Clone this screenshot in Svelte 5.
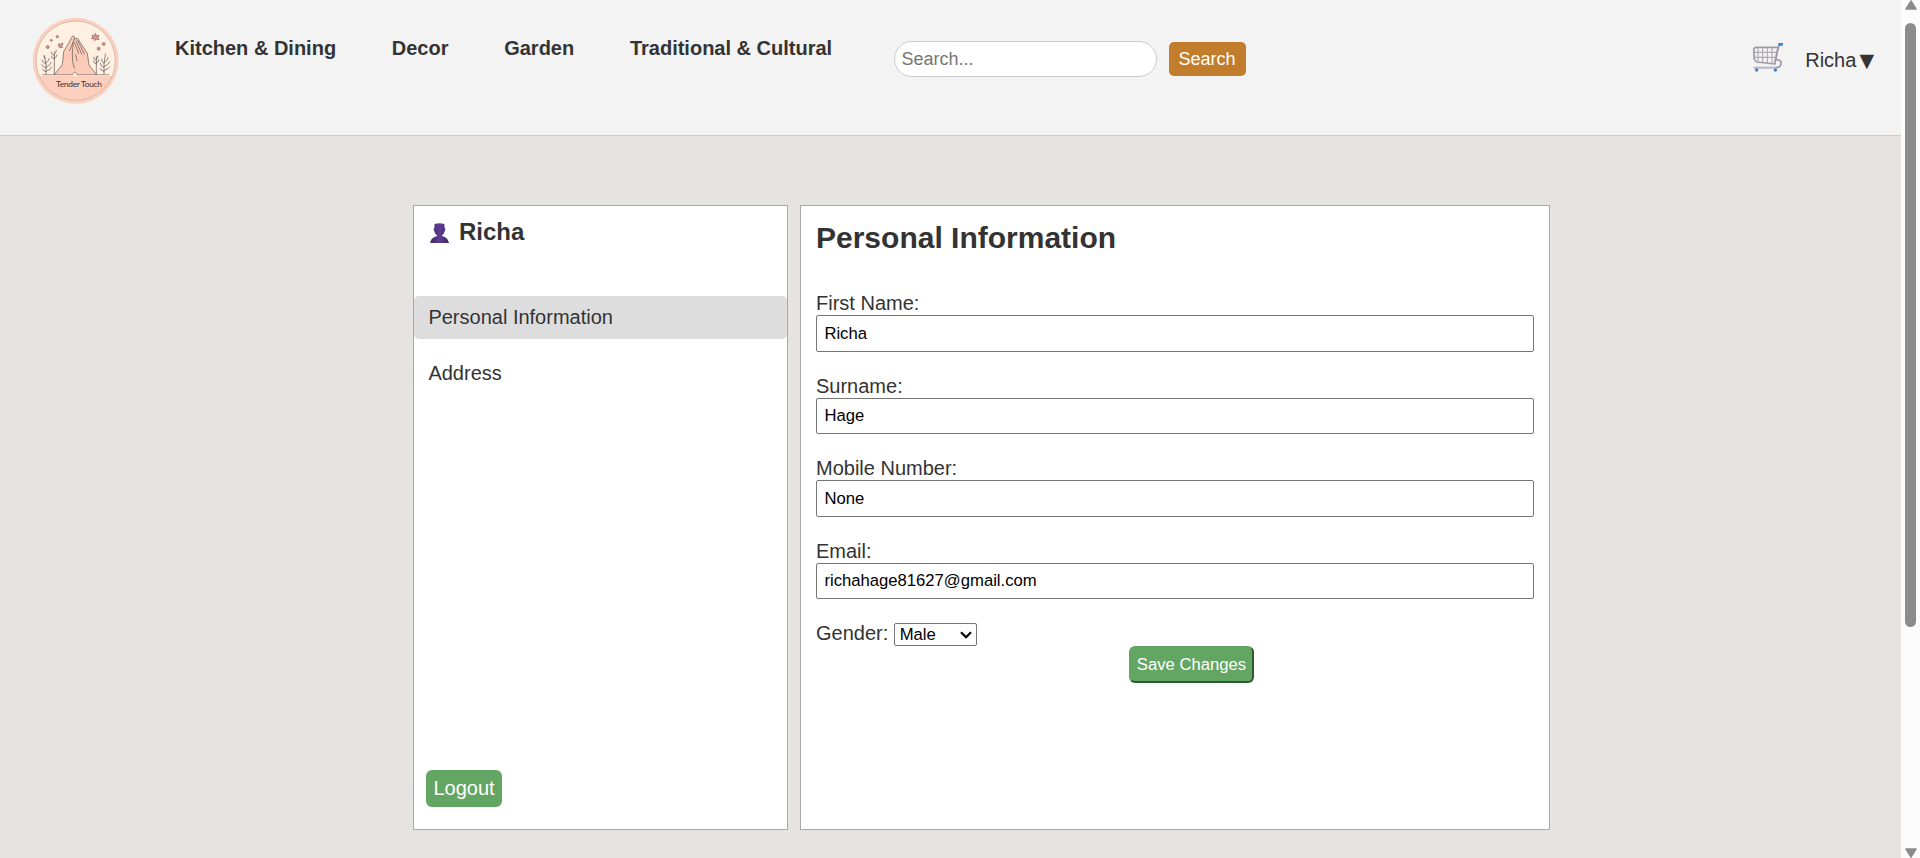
<script>
  const links = ['Kitchen & Dining', 'Decor', 'Garden', 'Traditional & Cultural'];
  const fields = [
    { id: 'first', label: 'First Name:', value: 'Richa' },
    { id: 'surname', label: 'Surname:', value: 'Hage' },
    { id: 'mobile', label: 'Mobile Number:', value: 'None' },
    { id: 'email', label: 'Email:', value: 'richahage81627@gmail.com' }
  ];
</script>

<div class="window">
  <div class="page">
    <header>
      <svg class="logo" viewBox="0 0 330 300">
        <circle cx="167" cy="152" r="129" fill="#fdcfbe" />
        <circle cx="167" cy="152" r="119" fill="#fff0e2" />
        <path d="M57 197H277A119 119 0 0 1 57 197Z" fill="#fdcfbe" />
        <circle cx="167" cy="152" r="119" fill="none" stroke="#b4aaa3" stroke-width="2" />
        <path d="M103 194L127 164L131 125L158 78Q164 76 163 88L166 84Q172 80 176 90L202 130L207 165L229 194H170Q164 178 158 194Z" fill="#fbcbb8" />
        <g fill="none" stroke="#5b5351" stroke-width="2" stroke-linecap="round">
          <path d="M68 194H158Q164 178 172 194H267" stroke-width="1.6" />
          <path d="M103 194L127 164L131 125L158 78Q165 75 163 88L149 122M163 88Q174 80 177 92L202 130L207 165L229 194M160 96L157 130Q155 157 163 174M164 99L176 130M168 93L185 132M173 91L193 132M167 135L171 152" />
          <path d="M78 193Q80 168 74 138M79 162Q66 158 66 150M79 157Q89 153 88 145M80 174Q67 172 65 164M80 170Q93 165 94 157M79 185Q70 184 67 177M80 183Q93 180 95 171M75 147Q70 141 72 136" />
          <path d="M103 193V126M103 137Q93 132 93 126M103 132Q110 129 109 121M103 147Q94 145 94 138M103 144Q111 142 111 135" />
          <path d="M229 193V139M229 151Q219 148 220 142M229 148Q236 145 234 138M229 162Q221 160 220 153M229 158Q238 157 237 149" />
          <path d="M252 193Q250 162 256 132M252 160Q243 156 245 147M253 156Q264 152 264 142M251 172Q240 168 241 160M252 169Q266 166 268 155M252 184Q241 182 240 175M252 181Q264 180 269 171" />
        </g>
        <g fill="#d99589" stroke="#71534f" stroke-width="1.6">
          <circle cx="83" cy="111" r="4.5" /><circle cx="94" cy="91" r="3" /><circle cx="112" cy="80" r="3.5" />
          <path d="M116 101L122 103L127 98L129 104L124 107L128 112L119 113L115 108Z" />
          <path d="M216 75L222 78L226 70L230 77L237 76L234 82L237 89L229 88L224 92L221 86L214 86L218 81Z" />
          <circle cx="251" cy="102" r="4.5" /><circle cx="236" cy="116" r="4.5" />
        </g>
        <text x="108" y="230" textLength="138" lengthAdjust="spacing">Tender Touch</text>
      </svg>
      <nav>
        {#each links as link}<a href="#top">{link}</a>{/each}
      </nav>
      <div class="search">
        <input placeholder="Search..." aria-label="Search" />
        <button>Search</button>
      </div>
      <div class="account">
        <svg class="cart" viewBox="0 0 90 90" fill="none" stroke-linecap="round" stroke-linejoin="round">
          <path d="M15 18V57M29 18V60M43 18V62M57 18V63M4 31H70M5 46H68" stroke="#aeabb2" stroke-width="3.5" />
          <path d="M75 16L65 66L12 60Q5 58 4 51L2 23Q2 17 8 16H73" stroke="#a09ba4" stroke-width="5" />
          <path d="M82 9L77 13L65 65M70 53Q86 53 84 65Q82 78 68 77H4" stroke="#a198ab" stroke-width="5" />
          <path d="M4 76H68" stroke="#ddd5e5" stroke-width="2" />
          <path d="M79 7H87" stroke="#3f83d3" stroke-width="8" />
          <circle cx="11" cy="84" r="5" fill="#397fd1" /><circle cx="67" cy="84" r="5" fill="#397fd1" />
        </svg>
        <span>Richa<span class="caret">▼</span></span>
      </div>
    </header>

    <main>
      <aside>
        <h3>
          <svg viewBox="0 0 57 60">
            <defs>
              <linearGradient id="bust"><stop stop-color="#3f2a66" /><stop offset=".5" stop-color="#5c3c94" /><stop offset="1" stop-color="#3f2a66" /></linearGradient>
            </defs>
            <path d="M14 3Q28-2 43 3L44 16Q48 18 44 25Q42 34 36 37V39Q54 43 57 60H0Q3 43 21 39V37Q15 33 13 25Q9 18 13 16Z" fill="url(#bust)" />
          </svg>
          Richa
        </h3>
        <a class="item active" href="#info">Personal Information</a>
        <a class="item" href="#address">Address</a>
        <button class="logout">Logout</button>
      </aside>
      <section>
        <h2>Personal Information</h2>
        {#each fields as f}
          <div class="field">
            <label for={f.id}>{f.label}</label>
            <input id={f.id} value={f.value} />
          </div>
        {/each}
        <div class="gender">
          <label for="gender">Gender:</label>
          <div class="select">
            <select id="gender"><option>Male</option><option>Female</option></select>
            <svg viewBox="0 0 12 8"><path d="M1 1.2L6 6.2L11 1.2" fill="none" stroke="#000" stroke-width="2.2" /></svg>
          </div>
        </div>
        <button class="save">Save Changes</button>
      </section>
    </main>
  </div>

  <div class="scrollbar">
    <svg viewBox="0 0 12 10"><path d="M6 1L11 9H1Z" /></svg>
    <div class="thumb"></div>
    <svg class="down" viewBox="0 0 12 10"><path d="M1 1H11L6 9Z" /></svg>
  </div>
</div>

<style>
  :global(body) { overflow: hidden; }
  .window, .window * { box-sizing: border-box; }
  .window {
    display: flex;
    height: 858px;
    font: 20px/23px "Liberation Sans", Arial, sans-serif;
    color: #333;
  }
  .page { flex: 1; background: #e5e4e2; }
  a { color: inherit; text-decoration: none; }
  input, button, select { font-family: inherit; margin: 0; }
  h2, h3 { margin: 0; }
  header {
    display: flex;
    align-items: flex-start;
    height: 136px;
    background: #f3f3f3;
    border-bottom: 1px solid #ccc;
  }
  .logo { width: 110px; height: 100px; margin: 10px 0 0 20px; }
  .logo text { font: 25px Lato, sans-serif; fill: #39302e; }
  nav { display: flex; gap: 55.7px; margin: 37px 0 0 45px; font-weight: bold; white-space: nowrap; }
  .search { display: flex; align-items: center; gap: 12px; margin: 41px 0 0 61.4px; }
  .search input {
    width: 263px;
    height: 36px;
    padding: 0 7px;
    border: 1px solid #ccc;
    border-radius: 19px;
    font-size: 18px;
    background: #fff;
  }
  .search button {
    width: 77px;
    height: 34px;
    padding: 0;
    border: 0;
    border-radius: 5px;
    font-size: 18px;
    color: #fff;
    background: #c17d2c;
  }
  .account { display: flex; margin: 42px 27px 0 auto; gap: 22px; }
  .account > span { padding-top: 7px; }
  .cart { width: 30px; height: 30px; }
  .caret { font-family: "DejaVu Sans", sans-serif; font-size: 19px; line-height: 1; margin-left: 3px; }
  main { display: flex; gap: 12px; margin: 69px 0 0 413px; }
  aside, section { height: 625px; background: #fff; border: 1px solid #a9a8a6; }
  aside { width: 375px; display: flex; flex-direction: column; align-items: flex-start; padding-bottom: 22px; }
  h3 { display: flex; gap: 10px; margin: 12px 0 50px 16px; font-size: 24px; line-height: 28px; }
  h3 svg { width: 19px; height: 20px; margin-top: 5px; }
  .item { width: 100%; height: 43px; padding: 10px 14.4px; border-radius: 5px; margin-bottom: 13px; }
  .active { background: #ddd; }
  .logout {
    width: 76px;
    height: 37px;
    margin: auto 0 0 12px;
    padding: 0;
    border: 0;
    border-radius: 6px;
    font-size: 20px;
    color: #fff;
    background: #63a663;
  }
  section { width: 750px; padding: 15px 15px 14px; }
  h2 { font-size: 30px; line-height: 34px; margin-bottom: 37px; }
  .field { display: flex; flex-direction: column; margin-bottom: 23px; }
  .field input {
    height: 36.5px;
    padding: 0.6px 7.4px 0;
    border: 1px solid #767676;
    border-radius: 2px;
    font-size: 16.667px;
    color: #000;
  }
  .gender { display: flex; gap: 6px; height: 24px; }
  .select { display: grid; width: 83px; height: 23px; margin-top: 1px; }
  .select > * { grid-area: 1 / 1; }
  select {
    appearance: none;
    padding: 0 4.4px;
    border: 1px solid #767676;
    border-radius: 2px;
    font-size: 16.667px;
    line-height: 19px;
    color: #000;
    background: #fff;
  }
  .select svg { width: 12px; height: 8px; place-self: center end; margin-right: 5px; pointer-events: none; }
  .save {
    display: block;
    width: 125px;
    height: 37px;
    margin-left: 313px;
    padding: 0;
    border: 2px solid;
    border-color: #63a663 #2b5a2b #2b5a2b #63a663;
    border-radius: 6px;
    font-size: 16.667px;
    color: #fff;
    background: #63a663;
  }
  .scrollbar { width: 19px; display: flex; flex-direction: column; align-items: center; background: #fcfcfc; }
  .scrollbar svg { width: 12px; height: 10px; fill: #8b8b8b; stroke: #8b8b8b; stroke-width: 1.5; stroke-linejoin: round; }
  .thumb { width: 11px; height: 604px; margin-top: 13px; border-radius: 6px; background: #8b8b8b; }
  .scrollbar .down { margin-top: auto; }
</style>
